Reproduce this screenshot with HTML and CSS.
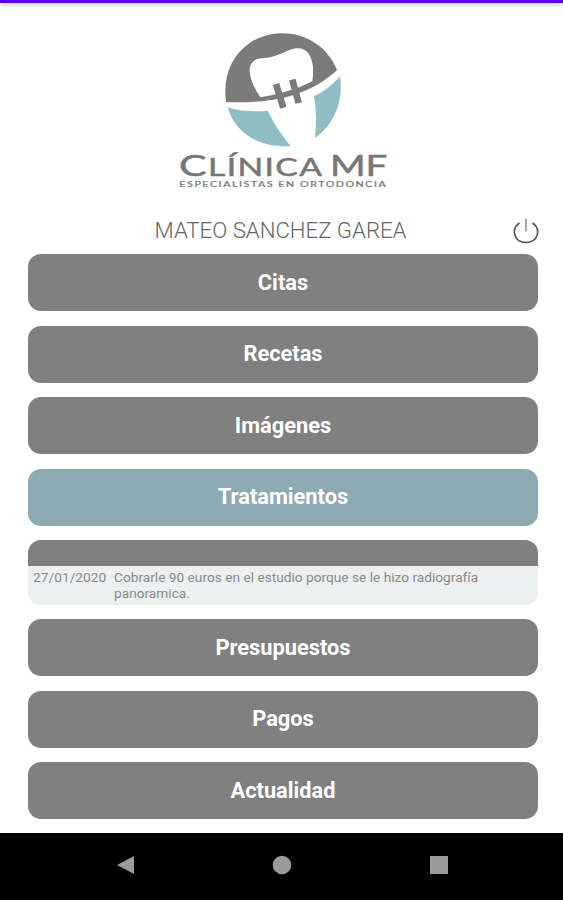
FILE: index.html
```html
<!DOCTYPE html>
<html lang="es">
<head>
    <meta charset="utf-8">
    <title>Clínica MF</title>
    <link rel="stylesheet" href="styles.css">
</head>
<body>
    <div class="statusbar"></div>

    <div class="container">
        <svg class="logo" viewBox="0 0 690 540">
            <path class="gray" d="M168 246 C158 170 184 106 240 68 C330 10 458 42 501 150 C440 206 350 254 168 246 Z"/>
            <path class="white" d="M271 232 C255 208 240 180 239 153 C239 128 252 117 275 115 C324 112 338 94 371 86 C410 79 424 104 429 140 C430 158 429 170 427 184 C380 208 330 222 271 232 Z"/>
            <path class="brace" d="M318 192 L340 263 M367 179 L386 249"/>
            <path class="blue" d="M173 262 C212 275 252 275 294 273 C307 304 334 345 362 378 C275 386 194 342 173 262 Z"/>
            <path class="blue" d="M432 229 C466 213 489 193 510 169 C521 243 493 314 435 354 C440 310 439 268 432 229 Z"/>
            <text class="name" x="27" y="469" font-size="84" textLength="83" lengthAdjust="spacingAndGlyphs">C</text>
            <text class="name spaced" x="114" y="469" font-size="73" textLength="346" lengthAdjust="spacingAndGlyphs">LÍNICA</text>
            <text class="name" x="480" y="469" font-size="84" textLength="172" lengthAdjust="spacingAndGlyphs">MF</text>
            <text class="slogan" x="28" y="501" font-size="21" textLength="624" lengthAdjust="spacingAndGlyphs">ESPECIALISTAS EN ORTODONCIA</text>
        </svg>

        <div class="user">
            <span>MATEO SANCHEZ GAREA</span>
            <svg class="power" viewBox="0 0 28 28">
                <path d="M7.5 6 C-1.5 12 2 25.5 14 25.5 C26 25.5 29.5 12 20.5 6"/>
                <path class="bar" d="M14 1.5 V14.5"/>
            </svg>
        </div>

        <div class="menu">
            <button>Citas</button>
            <button>Recetas</button>
            <button>Imágenes</button>
            <button class="active">Tratamientos</button>
            <div class="detail">
                <div class="detail-head"></div>
                <div class="detail-row">
                    <span class="date">27/01/2020</span>
                    <span class="note">Cobrarle 90 euros en el estudio porque se le hizo radiografía<br>panoramica.</span>
                </div>
            </div>
            <button>Presupuestos</button>
            <button>Pagos</button>
            <button>Actualidad</button>
        </div>
    </div>

    <div class="navbar">
        <svg viewBox="0 0 20 20"><path d="M1 10 L18 1 V19 Z"/></svg>
        <svg viewBox="0 0 20 20"><circle cx="10" cy="10" r="9.3"/></svg>
        <svg viewBox="0 0 20 20"><rect x="1" y="1" width="18" height="18"/></svg>
    </div>
</body>
</html>
```

FILE: styles.css
```css
* {
    box-sizing: border-box;
}

body {
    font-family: Roboto, sans-serif;
    background-color: #fff;
    margin: 0;
    height: 900px;
    display: flex;
    flex-direction: column;
    overflow: hidden;
}

.statusbar {
    height: 3px;
    background-color: #5c00e6;
    box-shadow: 0 1px 5px rgba(0, 0, 0, 0.35);
}

.container {
    flex: 1;
    padding: 17px 25px 0 28px;
}

.logo {
    display: block;
    width: 230px;
    height: 180px;
    margin-left: 142px;
}

.gray {
    fill: #7b7b7b;
}

.white {
    fill: #fff;
}

.blue {
    fill: #8fbdc4;
}

.brace {
    stroke: #7b7b7b;
    stroke-width: 20px;
}

.name {
    font-family: Lato, sans-serif;
    fill: #777;
    stroke: #777;
    stroke-width: 1.5px;
}

.spaced {
    letter-spacing: 3px;
}

.slogan {
    font-family: Lato, sans-serif;
    letter-spacing: 3px;
    fill: #777;
    stroke: #777;
    stroke-width: 0.6px;
}

.user {
    position: relative;
    height: 54px;
    padding-top: 16px;
    text-align: center;
    font-size: 22.2px;
    line-height: 28px;
    font-weight: 300;
    color: #666;
}

.user span {
    display: inline-block;
    margin-right: 5px;
}

.power {
    position: absolute;
    right: -2px;
    top: 17px;
    width: 28px;
    height: 28px;
    fill: none;
    stroke: #555;
    stroke-width: 1.6px;
}

.power .bar {
    stroke: #aaa;
    stroke-width: 2.2px;
}

.menu {
    display: flex;
    flex-direction: column;
    gap: 14.5px;
}

button {
    height: 57px;
    padding: 0 0 1px;
    border: none;
    border-radius: 13px;
    background-color: #808080;
    color: #fff;
    font-family: Roboto, sans-serif;
    font-size: 21.8px;
    font-weight: bold;
}

button.active {
    background-color: #8da9b1;
}

.detail {
    height: 64.5px;
    border-radius: 13px;
    background-color: #ecf0f1;
    overflow: hidden;
}

.detail-head {
    height: 26px;
    background-color: #808080;
}

.detail-row {
    display: flex;
    padding: 3px 0 0 5px;
    font-size: 13.7px;
    line-height: 16px;
    color: #8a8a8a;
}

.date {
    width: 81px;
    letter-spacing: 0.05px;
}

.navbar {
    height: 67px;
    background-color: #000;
    display: flex;
    justify-content: center;
    gap: 136.5px;
    padding: 22px 0 0 1px;
}

.navbar svg {
    width: 20px;
    height: 20px;
    fill: #9b9b9b;
}
```
